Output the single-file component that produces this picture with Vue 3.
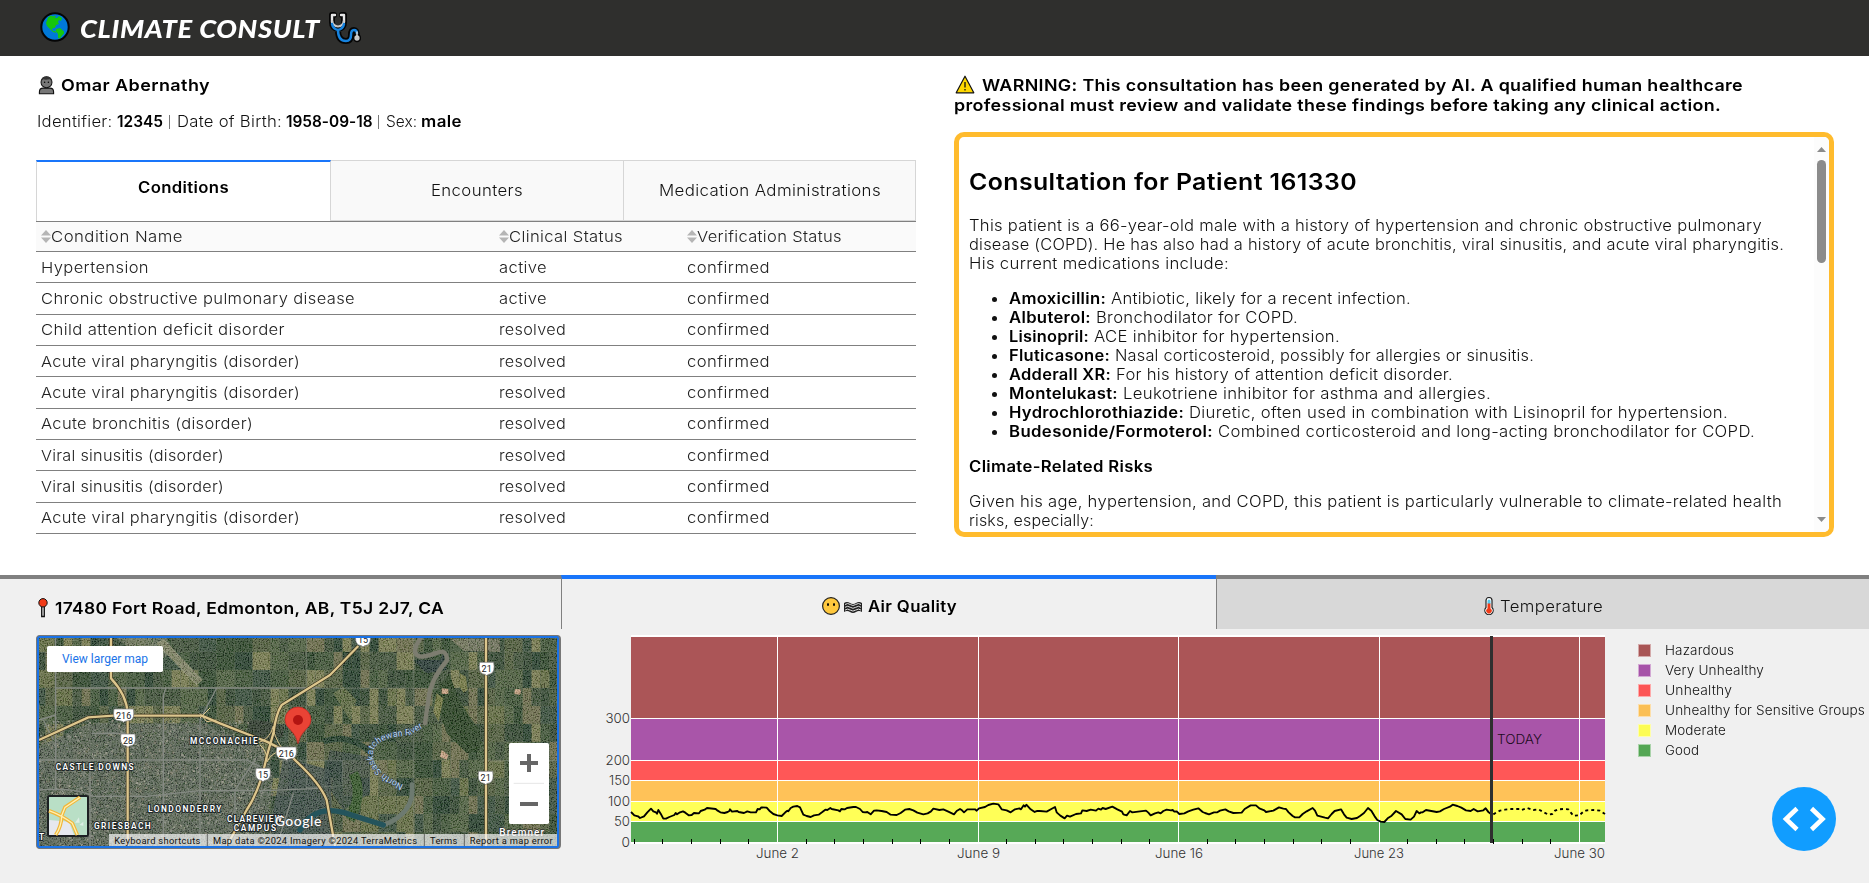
<script setup>
// v-fit sets a run of text to a given width in pixels, partly by tracking and partly by widening its letters
const vFit = {
  mounted(el, { value }) {
    el.style.display = 'inline-block'
    const n = el.textContent.trim().length
    const natural = el.offsetWidth
    if (n > 1) el.style.letterSpacing = `${(((value - natural) * 0.3) / n).toFixed(3)}px`
    const tracked = el.getBoundingClientRect().width
    el.style.transform = `scaleX(${(value / tracked).toFixed(4)})`
    el.style.width = `${tracked}px`
    el.style.marginRight = `${value - tracked + (parseFloat(getComputedStyle(el).marginRight) || 0)}px`
    el.style.display = ''
  },
}

const pharyngitis = ['Acute viral pharyngitis (disorder)', 259]
const sinusitis = ['Viral sinusitis (disorder)', 183]
const conditions = [
  ['Hypertension', 108, 'active', 48],
  ['Chronic obstructive pulmonary disease', 314, 'active', 48],
  ['Child attention deficit disorder', 244, 'resolved', 67],
  [...pharyngitis, 'resolved', 67],
  [...pharyngitis, 'resolved', 67],
  ['Acute bronchitis (disorder)', 212, 'resolved', 67],
  [...sinusitis, 'resolved', 67],
  [...sinusitis, 'resolved', 67],
  [...pharyngitis, 'resolved', 67],
]
const columns = [['Condition Name', 132], ['Clinical Status', 114], ['Verification Status', 145]]

const medications = [
  ['Amoxicillin:', 97, 'Antibiotic, likely for a recent infection.', 300],
  ['Albuterol:', 82, 'Bronchodilator for COPD.', 202],
  ['Lisinopril:', 80, 'ACE inhibitor for hypertension.', 246],
  ['Fluticasone:', 101, 'Nasal corticosteroid, possibly for allergies or sinusitis.', 419],
  ['Adderall XR:', 102, 'For his history of attention deficit disorder.', 337],
  ['Montelukast:', 109, 'Leukotriene inhibitor for asthma and allergies.', 368],
  ['Hydrochlorothiazide:', 175, 'Diuretic, often used in combination with Lisinopril for hypertension.', 539],
  ['Budesonide/Formoterol:', 204, 'Combined corticosteroid and long-acting bronchodilator for COPD.', 537],
]

const bands = [
  { y: 637, h: 82, c: '#ab5557' },
  { y: 719, h: 42, c: '#a955a9' },
  { y: 761, h: 20, c: '#ff5757' },
  { y: 781, h: 21, c: '#ffc258' },
  { y: 802, h: 20, c: '#ffff57' },
  { y: 822, h: 21, c: '#57a957' },
]
const yAxis = [[300, 718, 24.5], [200, 760, 24.5], [150, 780, 21], [100, 801, 22], [50, 821, 16], [0, 842, 8.5]]
const xAxis = [
  ['June 2', 777, 756, 43],
  ['June 9', 978, 957, 43],
  ['June 16', 1178, 1155, 48],
  ['June 23', 1379, 1354, 50],
  ['June 30', 1579, 1554, 51],
]
const ticks = Array.from({ length: 34 }, (_, i) => Math.floor(634.3 + i * 28.64))
  .filter((x) => x < 1560 && !xAxis.some((a) => Math.abs(a[1] - x) < 4))

const legend = [
  ['Hazardous', 69, '#a85555'],
  ['Very Unhealthy', 99, '#a653a8'],
  ['Unhealthy', 67, '#fc5555'],
  ['Unhealthy for Sensitive Groups', 200, '#fabf55'],
  ['Moderate', 61, '#fcfc54'],
  ['Good', 34, '#54a654'],
]

// Hourly index, in thirds of a pixel; the three series join end to end
const seriesA = '153,756 163,766 174,769 180,774 192,769 202,757 213,746 220,754 228,757 231,761 235,750 242,761 250,776 258,776 268,771 283,765 287,759 291,763 300,757 309,754 316,758 326,766 335,765 342,759 357,760 362,753 374,749 381,744 407,747 413,752 421,757 433,759 443,756 448,753 450,748 456,755 472,753 476,756 492,759 502,754 512,757 528,757 533,747 539,748 544,742 560,743 568,752 580,762 592,766 605,768 616,757 622,752 625,754 632,744 640,740 652,738 660,742 670,764 680,768 692,771 702,766 716,764 726,757 736,749 742,750 751,744 755,747 775,751 780,754 784,747 795,748 801,744 820,741 828,741 840,747 848,756 855,757 862,756 872,763 882,752 890,751 905,753 920,756 932,764 950,765 962,759 975,749 988,747 1000,751 1012,758 1030,763 1043,760 1053,754 1060,746 1078,750 1090,748 1105,755 1122,763 1130,753 1140,747 1146,751 1152,757 1162,748 1185,748 1190,752 1197,745 1215,741 1225,735 1240,731 1255,733 1265,748 1280,751 1292,757 1305,748 1318,745 1323,748 1331,736 1335,740 1339,734 1352,748 1364,756 1372,753 1380,753'
const seriesB = '0,573 20,575 34,567 45,561 50,577 61,587 74,595 81,587 90,590 108,582 123,580 127,571 140,573 152,569 168,572 175,566 183,569 188,564 197,567 217,560 232,568 246,575 250,583 260,586 270,573 277,577 300,574 318,572 325,578 332,586 345,580 355,577 362,580 370,573 380,569 393,571 398,570 403,575 410,574 418,582 433,580 445,574 460,569 475,565 488,576 495,579 507,583 522,577 532,577 540,572 556,568 566,574 580,579 605,578 614,567 632,556 648,556 658,565 673,571 678,576 700,572 717,562 730,566 738,567 746,577 758,588 765,592 778,592 788,582 800,574 818,564 825,572 832,587 855,593 864,595 875,582 884,573 903,568 912,583 920,593 935,597 951,594 960,588 972,579 984,564 994,572 1004,589 1012,600 1022,605 1033,606 1043,595 1055,587 1068,573 1085,583 1096,597 1112,599 1122,590 1130,573 1138,580 1143,577 1148,577 1158,570 1190,576 1200,574 1212,567 1230,560 1238,554 1252,558 1264,563 1278,571 1292,573 1301,567 1313,574 1330,571 1337,565 1346,577 1354,583'
const forecast = '220,763 230,757 240,752 255,749 275,747 300,747 305,750 322,744 340,750 355,748 368,755 385,764 397,762 405,752 415,748 430,747 445,748 452,757 460,767 478,766 490,755 500,751 520,750 540,752 555,762'

// Patchwork of farmland and city blocks under the map labels
let seed = 41
const rnd = () => ((seed = (seed * 16807) % 2147483647) / 2147483647)
const fieldColors = ['#2c3f2f', '#3a4a37', '#4d573b', '#1f372b', '#646a42', '#3a4e35', '#6e6a4c', '#31463a', '#29402a', '#7b7a50', '#4a5a3e']
const pick = (list) => list[Math.floor(rnd() * list.length)]
const fields = []
for (let y = 222; y < 870; y += 54) {
  for (let x = 110; x < 1680; x += 54) {
    const split = rnd() > 0.5
    fields.push({ x, y, w: split ? 27 : 54, h: 54, c: pick(fieldColors) })
    if (split) fields.push({ x: x + 27, y, w: 27, h: 54, c: pick(fieldColors) })
  }
}
const specks = Array.from({ length: 3200 }, () => ({
  x: 117 + rnd() * 700,
  y: 480 + rnd() * 380,
  s: 2 + rnd() * 5,
  c: pick(['#858681', '#6e756e', '#323d33', '#9a968c', '#4b5a47', '#3f4b42', '#766f62']),
}))
const shields = [
  ['216', 371, 467, 58], ['28', 384, 542, 42], ['216', 859, 581, 58], ['15', 789, 645, 42],
  ['15', 1089, 241, 42], ['21', 1460, 327, 42], ['21', 1457, 654, 42],
]
const places = [
  ['MCCONACHIE', 570, 552, 203], ['CASTLE DOWNS', 167, 630, 234], ['LONDONDERRY', 444, 756, 220],
  ['GRIESBACH', 282, 807, 170], ['CLAREVIEW', 681, 786, 165], ['CAMPUS', 701, 813, 127],
]
const highways = 'M117 540L265 472 340 467H605L660 490 800 545 860 575 890 605Q960 670 980 720L1005 858M333 234V355Q380 405 383 460V858M1075 258L990 345 845 435Q828 460 820 520L800 590Q780 690 740 750L680 858M1458 234V858'
</script>

<template>
  <div class="page">
    <header class="topbar">
      <svg class="globe" viewBox="0 0 30 30">
        <circle cx="15" cy="15" r="13.7" fill="#0078d7" stroke="#050505" stroke-width="2" />
        <path d="M8 5.500l3-2 2 1 2-1 1 1.500-2 1 3 0 2-2 3 2-1 3-2-1-1 2 1 2-3 1-1 3-2 0-1 1 1 2 2 0 1 2-3-1-3-3-3-3-1-3z" fill="#16c60c" />
        <path d="M16 17l4-1 4 3.500 0 2-2 2-2 3-2-.500 0-4-2.500-3z" fill="#16c60c" />
      </svg>
      <h1 v-fit="240" class="fit brand">CLIMATE CONSULT</h1>
      <svg class="steth" viewBox="0 0 32 32" fill="none" stroke-linecap="round" stroke-linejoin="round">
        <path d="M5 3H3v7q0 6 6 7 6-1 6-7V3h-2M9 18q0 11 8 11 5 0 5-6 0-5 3-5 3 0 3 7" stroke="#050505" stroke-width="6" />
        <path d="M6 3H3v7M12 3h3v7" stroke="#e6e6e6" stroke-width="2.400" />
        <path d="M3.200 9q.8 5 5.800 5.500 5-.5 5.800-5.500" stroke="#c9c9c9" stroke-width="2" />
        <path d="M3 12q1 5 6 6 5-1 6-6M9 18q0 11 8 11 5 0 5-6 0-5 3-5 3 0 3 4" stroke="#1683df" stroke-width="2.500" />
        <circle cx="28" cy="26" r="3.400" fill="#c8c8c8" stroke="#050505" stroke-width="1.500" />
        <path d="M28 20v4" stroke="#ddd" stroke-width="1.500" />
      </svg>
    </header>

    <main class="upper">
      <section class="patient">
        <div class="name">
          <svg viewBox="0 0 18 20">
            <path d="M1.500 19.300v-2q0-4 4-4h7q4 0 4 4v2z" fill="#777" stroke="#111" stroke-width="1.200" />
            <circle cx="9" cy="7" r="5.800" fill="#777" stroke="#111" stroke-width="1.100" />
            <path d="M3.500 6Q3 1 9 1t5.500 5l-2-2q-5 1-7 0z" fill="#333" />
            <circle cx="7" cy="7" r=".8" /><circle cx="11" cy="7" r=".8" />
          </svg>
          <strong v-fit="149" class="fit">Omar Abernathy</strong>
        </div>
        <div class="ids">
          <span v-fit="75.5" class="fit">Identifier:</span><b v-fit="46" class="fit">12345</b><i />
          <span v-fit="105" class="fit">Date of Birth:</span><b v-fit="86.5" class="fit">1958-09-18</b><i />
          <span v-fit="31" class="fit">Sex:</span><b v-fit="41" class="fit">male</b>
        </div>
        <nav class="tabs">
          <div class="tab active"><b v-fit="91" class="fit">Conditions</b></div>
          <div class="tab"><span v-fit="92" class="fit">Encounters</span></div>
          <div class="tab"><span v-fit="222" class="fit">Medication Administrations</span></div>
        </nav>
        <div class="table">
          <div class="row head">
            <div v-for="c in columns" :key="c[0]" class="cell">
              <svg viewBox="0 0 10 13"><path d="M0 5.500 5 0l5 5.500zM0 7.500h10L5 13z" fill="#b5b5b5" /></svg>
              <span v-fit="c[1]" class="fit">{{ c[0] }}</span>
            </div>
          </div>
          <div v-for="(r, i) in conditions" :key="i" class="row">
            <div class="cell"><span v-fit="r[1]" class="fit">{{ r[0] }}</span></div>
            <div class="cell"><span v-fit="r[3]" class="fit">{{ r[2] }}</span></div>
            <div class="cell"><span v-fit="83" class="fit">confirmed</span></div>
          </div>
        </div>
      </section>

      <section class="consult">
        <div class="warning">
          <div class="wline">
            <svg viewBox="0 0 20 19">
              <path d="M10 1.200 18.800 17.800H1.200z" fill="#ffd800" stroke="#111" stroke-width="1.200" stroke-linejoin="round" />
              <path d="M10 7v5.500M10 14v1.500" stroke="#111" stroke-width="1.300" />
            </svg>
            <b v-fit="761" class="fit">WARNING: This consultation has been generated by AI. A qualified human healthcare</b>
          </div>
          <b v-fit="767" class="fit">professional must review and validate these findings before taking any clinical action.</b>
        </div>
        <article class="report">
          <div class="body">
            <h2 v-fit="388" class="fit">Consultation for Patient 161330</h2>
            <p>
              <span v-fit="793" class="fit">This patient is a 66-year-old male with a history of hypertension and chronic obstructive pulmonary</span>
              <span v-fit="815" class="fit">disease (COPD). He has also had a history of acute bronchitis, viral sinusitis, and acute viral pharyngitis.</span>
              <span v-fit="260" class="fit">His current medications include:</span>
            </p>
            <ul>
              <li v-for="m in medications" :key="m[0]">
                <b v-fit="m[1]" class="fit">{{ m[0] }}</b><span v-fit="m[3]" class="fit">{{ m[2] }}</span>
              </li>
            </ul>
            <h3 v-fit="184" class="fit">Climate-Related Risks</h3>
            <p>
              <span v-fit="813" class="fit">Given his age, hypertension, and COPD, this patient is particularly vulnerable to climate-related health</span>
              <span v-fit="125" class="fit">risks, especially:</span>
            </p>
          </div>
          <div class="scroll">
            <svg viewBox="0 0 9 5"><path d="M0 5 4.500 0 9 5z" fill="#8b8b8b" /></svg>
            <div class="thumb" />
            <svg viewBox="0 0 9 5"><path d="M0 0 4.500 5 9 0z" fill="#8b8b8b" /></svg>
          </div>
        </article>
      </section>
    </main>

    <section class="lower">
      <div class="place">
        <div class="address">
          <svg viewBox="0 0 10 20">
            <path d="M3.700 8v10.500h2.600V8" fill="#ddd" stroke="#111" stroke-width="1.300" />
            <circle cx="5" cy="4.800" r="4.200" fill="#f03a17" stroke="#111" />
          </svg>
          <b v-fit="389" class="fit">17480 Fort Road, Edmonton, AB, T5J 2J7, CA</b>
        </div>
        <div class="mapframe">
          <svg class="map" viewBox="117 234 1554 624">
            <defs>
              <filter id="grain" x="0" y="0" width="100%" height="100%">
                <feTurbulence type="fractalNoise" baseFrequency=".25" numOctaves="3" seed="4" />
                <feColorMatrix values="1.600 0 0 0 -.55  1.600 0 0 0 -.5  1.400 0 0 0 -.5  0 0 0 0 .3" />
              </filter>
              <path id="riverlabel" d="M1211 674Q1105 628 1122 568Q1140 530 1230 526L1290 490" />
            </defs>
            <rect x="117" y="234" width="1554" height="624" fill="#3f4c39" />
            <rect v-for="(f, i) in fields" :key="'f' + i" :x="f.x" :y="f.y" :width="f.w" :height="f.h" :fill="f.c" stroke="#5b644f" stroke-width=".6" />
            <path d="M117 560L265 490H610L780 560 820 650 790 858H117z" fill="#59615a" opacity=".9" />
            <path d="M850 590l140 40 10 228H800z" fill="#38454a" opacity=".85" />
            <path d="M990 570l120 20v110l-80 50-60-90z" fill="#2c3c40" opacity=".7" />
            <rect v-for="(s, i) in specks" :key="'s' + i" :x="s.x" :y="s.y" :width="s.s" :height="s.s" :fill="s.c" />
            <path d="M350 234h150l20 40-60 40-60-40z" fill="#8b8b78" opacity=".6" />
            <path d="M492 240l115 120-18 14L470 250z" fill="#85846a" stroke="#a8a48a" stroke-width="2" />
            <path d="M750 480q60 0 100 20v30l-70 20-40-40z" fill="#252f28" />
            <path d="M1240 300l80 0 10-20 10 50-60 10z" fill="#1f3034" />
            <path d="M1350 340q20 90 90 170l0 60-40 10-60-60-40-120z" fill="#22391f" />
            <path d="M1350 236h150v40l-110-4z" fill="#8e8572" opacity=".7" />
            <path d="M1380 340l18 10 5 40-12 8-14-20zM1310 400l20 15-14 70-16-30z" fill="#9b9450" opacity=".7" />
            <path d="M1325 385l20 2v15h-20zM1545 388h18l-2 16-18-2zM1325 570l20 15-5 15-20-10z" fill="#dba98d" />
            <path d="M1000 400l30-20 40 40-20 60z" fill="#7f8150" opacity=".6" />
            <path d="M970 545q80-30 150 40" fill="none" stroke="#183327" stroke-width="18" />
            <path d="M1060 640q30 60-10 140" fill="none" stroke="#2c4f24" stroke-width="30" />
            <rect x="117" y="234" width="1554" height="624" filter="url(#grain)" />

            <g fill="none" stroke="#858a83" stroke-width="4">
              <path d="M165 384H960M167 234V690M117 690Q220 680 280 709H440L600 692H790L960 685M117 600H740l40 20M497 384L490 410V858M650 384L600 480V858M275 520h110v-2M270 600v258M880 700l-50 158M705 858V690l60-90" />
              <path d="M117 480l50-15M130 480l30 60" />
            </g>
            <path d="M920 234v455M840 602h188v75l-110 6M1458 602h213M960 385h360M1240 234v600" fill="none" stroke="#8b9289" stroke-width="2" opacity=".7" />
            <g fill="none" stroke-linecap="round">
              <path d="M1262 234Q1230 280 1260 290C1310 290 1335 250 1342 300Q1290 360 1285 420L1275 490" stroke="#7d7d70" stroke-width="13" />
              <path d="M1236 674Q1245 760 1150 795" stroke="#6d7a70" stroke-width="14" />
              <path d="M900 810Q940 735 1030 757L1150 795" stroke="#24545c" stroke-width="16" />
            </g>
            <g fill="none" stroke-linejoin="round">
              <path :d="highways" stroke="#3c3420" stroke-width="11" />
              <path :d="highways" stroke="#dcc68d" stroke-width="7" />
              <path d="M775 548q35-10 45-50 0 30 25 65M780 555q20 15 22 50 10-25 40-32M600 460l20 25 30-5M600 474l30-30" stroke="#dcc68d" stroke-width="3" />
            </g>

            <g v-for="(s, i) in shields" :key="'h' + i">
              <path :d="`M${s[1] - s[3] / 2} ${s[2] - 20}h${s[3]}q5 28-8 34-${s[3] / 2 - 8} 2-${s[3] / 2 - 8} 7 0-5-${s[3] / 2 - 8}-7-13-6-8-34z`" fill="#fff" stroke="#777" stroke-width="2" />
              <text :x="s[1]" :y="s[2] + 9" class="num">{{ s[0] }}</text>
            </g>
            <text v-for="p in places" :key="p[0]" :x="p[1]" :y="p[2]" :textLength="p[3]" class="town">{{ p[0] }}</text>
            <text x="1498" y="827" textLength="134" class="bremner">Bremner</text>
            <text class="rivername"><textPath href="#riverlabel" textLength="318">North Saskatchewan River</textPath></text>
            <text x="117" y="840" class="town">T</text>

            <path d="M894 551Q890 528 870 508Q855 495 855 480a39 39 0 0 1 78 0Q933 495 918 508Q898 528 894 551z" fill="#ea4335" stroke="#c5221f" stroke-width="2" />
            <circle cx="894" cy="480" r="15" fill="#b31412" />

            <rect x="141" y="258" width="348" height="78" rx="5" fill="#fff" />
            <text x="186" y="309" textLength="258" class="larger">View larger map</text>

            <rect x="144" y="708" width="120" height="120" rx="4" fill="#b9dfc6" stroke="#1d2023" stroke-width="6" />
            <path d="M147 780l60 5 15 40h-75z" fill="#e6e8ef" />
            <g fill="none">
              <path d="M147 752q40 15 70 38l15 35M240 712l-45 30-10 25q0 30-18 58" stroke="#f1b638" stroke-width="11" />
              <path d="M147 752q40 15 70 38l15 35M240 712l-45 30-10 25q0 30-18 58" stroke="#fff0b0" stroke-width="4" />
            </g>
            <path d="M225 788l12-16 2 16zM238 795l12-10v12z" fill="#dceee4" />

            <rect x="1527" y="549" width="120" height="243" rx="5" fill="#fff" />
            <path d="M1541 670h91" stroke="#e6e6e6" stroke-width="3" />
            <path d="M1560 609h54M1587 582v54M1560 732h54" stroke="#666" stroke-width="12" />
            <text x="824" y="797" textLength="140" class="google">Google</text>
            <rect x="327" y="822" width="1344" height="36" fill="#f5f5f5" opacity=".7" />
            <path d="M622 822v36M1273 822v36M1393 822v36" stroke="#333" stroke-width="2" />
            <g class="credit">
              <text x="343" y="851" textLength="258">Keyboard shortcuts</text>
              <text x="639" y="851" textLength="612">Map data ©2024 Imagery ©2024 TerraMetrics</text>
              <text x="1290" y="851" textLength="82">Terms</text>
              <text x="1409" y="851" textLength="249">Report a map error</text>
            </g>
          </svg>
        </div>
      </div>

      <div class="air">
        <nav class="ctabs">
          <div class="ctab on">
            <svg class="face" viewBox="0 0 18 18">
              <circle cx="9" cy="9" r="8.400" fill="#ffc83d" stroke="#222" stroke-width="1.200" />
              <ellipse cx="6" cy="7.500" rx="1" ry="1.500" /><ellipse cx="12" cy="7.500" rx="1" ry="1.500" />
            </svg>
            <svg class="fog" viewBox="0 0 18 12" fill="none">
              <path d="M0 2q3-2 6 0t6 0 6 0V11q-3-2-6 0t-6 0-6 0z" fill="#222" />
              <path d="M1 3.500q2.700-2 5.300 0t5.400 0 5.300 0M1 6.300q2.700-2 5.300 0t5.400 0 5.300 0M1 9.100q2.700-2 5.300 0t5.400 0 5.300 0" stroke="#ddd" stroke-width="1" />
            </svg>
            <b v-fit="89" class="fit">Air Quality</b>
          </div>
          <div class="ctab off">
            <svg class="thermo" viewBox="0 0 10 18">
              <path d="M2 3.500a3 3 0 0 1 6 0v7a4.200 4.200 0 1 1-6 0z" fill="#fff" stroke="#222" stroke-width="1.200" />
              <path d="M3.500 4a1.500 1.500 0 0 1 3 0v3h-3z" fill="#50c8f0" />
              <path d="M3.500 6.500h3v5a2.700 2.700 0 1 1-3 0z" fill="#f03a17" />
            </svg>
            <span v-fit="103" class="fit">Temperature</span>
          </div>
        </nav>
        <div class="chartrow">
          <svg class="chart" viewBox="600 630 1010 240">
            <rect x="631" y="635" width="974" height="209" fill="#fff" />
            <g shape-rendering="crispEdges">
              <rect v-for="b in bands" :key="b.y" x="631" :y="b.y" width="974" :height="b.h - 1" :fill="b.c" />
              <rect v-for="a in xAxis" :key="a[0]" :x="a[1]" y="637" width="1" height="206" fill="#fff" />
              <rect v-for="t in ticks" :key="t" :x="t" y="839" width="1" height="5" />
            </g>
            <text v-for="a in yAxis" :key="a[0]" :x="630 - a[2]" :y="a[1] + 5" :textLength="a[2]" lengthAdjust="spacingAndGlyphs">{{ a[0] }}</text>
            <text v-for="a in xAxis" :key="a[0]" :x="a[2]" y="858" :textLength="a[3]" lengthAdjust="spacingAndGlyphs">{{ a[0] }}</text>
            <g fill="none" stroke="#000" stroke-width="5.600" stroke-linejoin="round">
              <polyline :points="seriesA" transform="translate(580 560) scale(.33333)" />
              <polyline :points="seriesB" transform="translate(1040 620) scale(.33333)" />
              <polyline :points="forecast" transform="translate(1420 560) scale(.33333)" stroke-dasharray="9 9" />
            </g>
            <rect x="1490" y="636" width="3" height="207" fill="#2f2f2f" />
            <text x="1497" y="744" textLength="45" lengthAdjust="spacingAndGlyphs" class="today">TODAY</text>
          </svg>
          <ul class="legend">
            <li v-for="l in legend" :key="l[0]">
              <svg viewBox="0 0 13 13"><rect width="13" height="13" :fill="l[2]" stroke="#fff" stroke-opacity=".5" stroke-width="2" /></svg>
              <span v-fit="l[1]" class="fit">{{ l[0] }}</span>
            </li>
          </ul>
        </div>
      </div>
      <div class="devtools">
        <svg viewBox="0 0 64 64" fill="none" stroke="#fff" stroke-width="4.600">
          <path d="M25 21.500 14 32l11 10.500M39.500 21.500 50.500 32l-11 10.500" />
        </svg>
      </div>
    </section>
  </div>
</template>

<style>
html, body { margin: 0; overflow: hidden; background: #fff; }
</style>

<style scoped>
.page { width: 1869px; height: 883px; font: 300 15.3px/19px Inter, "Open Sans", sans-serif; color: #111; overflow: hidden; }
svg { display: block; flex: none; }
.fit { display: inline-block; white-space: nowrap; transform-origin: 0 50%; }
b, strong, h2, h3 { font-weight: 600; color: #000; margin: 0; }

.topbar { height: 56px; box-sizing: border-box; background: #2f2f2d; display: flex; align-items: flex-start; padding: 12px 0 0 40px; }
.globe { width: 30px; height: 30px; }
.brand { margin: 0 9px 0 10px; font: italic 900 25px/32px Lato, sans-serif; color: #fff; }
.steth { width: 32px; height: 32px; }

.upper { height: 519px; box-sizing: border-box; padding: 0 35px 0 36px; display: grid; grid-template-columns: 880px 880px; gap: 38px; }
.name { display: flex; align-items: center; height: 20px; margin-top: 19px; padding-left: 2px; font-size: 16.500px; }
.name svg { width: 17px; height: 20px; margin-right: 6px; }
.ids { display: flex; height: 19px; margin: 17px 0 0 1px; }
.ids b { margin-left: 4px; }
.ids i { width: 1px; height: 14px; margin: 3px 7px 0 6px; background: #777; }
.tabs { display: grid; grid-template-columns: 295px 293px 292px; height: 61px; margin-top: 29px; }
.tab { box-sizing: border-box; border: 1px solid #d6d6d6; border-left-width: 0; background: #f9f9f9; text-align: center; padding-top: 20px; }
.tab.active { background: #fff; border-top: 2px solid #1975fa; border-left-width: 1px; border-bottom: 0; padding-top: 16px; }
.table { font-size: 15px; color: #222; border-top: 1px solid #808080; }
.row { display: grid; grid-template-columns: 458px 188px 1fr; height: 31.330px; box-sizing: border-box; border-bottom: 1px solid #808080; align-items: center; padding-left: 5px; }
.row.head { height: 30px; background: #fafafa; }
.cell { display: flex; align-items: center; }
.cell svg { width: 10px; height: 13px; }

.warning { height: 76px; box-sizing: border-box; padding-top: 19px; font-size: 16.500px; line-height: 20px; }
.wline { display: flex; height: 20px; }
.wline svg { width: 20px; height: 19px; margin: 0 7px 0 1px; }
.warning b { display: block; }
.report { height: 405px; box-sizing: border-box; border: 5px solid #ffbb2d; border-radius: 10px; display: flex; justify-content: space-between; overflow: hidden; }
.body { padding-left: 10px; }
.body h2 { font-size: 23px; line-height: 30px; margin-top: 30px; display: block; }
.body p { margin: 19px 0 0; }
.body p .fit { display: block; }
.body ul { margin: 16px 0; padding-left: 40px; }
.body li { height: 19px; }
.body li::marker { font-size: 16px; }
.body li b { margin-right: 5px; }
.body h3 { font-size: 15.300px; display: block; }
.body h3 + p { margin-top: 16px; }
.scroll { width: 15px; box-sizing: border-box; background: #fcfcfc; display: flex; flex-direction: column; align-items: center; padding: 10px 0; }
.scroll svg { width: 9px; height: 5px; }
.thumb { width: 9px; height: 103px; border-radius: 5px; background: #8b8b8b; margin: 8px 0 auto; }

.lower { height: 308px; background: #f0f0f0; display: grid; grid-template-columns: 561px 1fr; position: relative; }
.place { border-top: 4px solid #808080; }
.address { display: flex; align-items: center; height: 20px; margin: 19px 0 17px 38px; font-size: 16.300px; }
.address svg { width: 10px; height: 20px; margin-right: 7px; }
.mapframe { width: 525px; height: 214px; margin-left: 36px; box-sizing: border-box; background: #1a73e8; border: 1px solid #777; border-right-width: 2px; border-radius: 4px; padding: 2px; }
.map { width: 518px; height: 208px; font-family: Roboto, sans-serif; }
.num { font-size: 27px; font-weight: 400; text-anchor: middle; fill: #222; }
.town { font-size: 25px; font-weight: 600; fill: #fff; stroke: #20282a; stroke-width: 6px; paint-order: stroke; }
.bremner { font-size: 30px; fill: #fff; font-weight: 500; stroke: #333; stroke-width: 4px; paint-order: stroke; }
.rivername { font-size: 27px; font-weight: 400; fill: #b7d5f1; stroke: #33434d; stroke-width: 3px; paint-order: stroke; }
.larger { font-size: 36px; font-weight: 400; fill: #1a73e8; }
.google { font: 500 42px Lato, sans-serif; fill: #fff; stroke: #444; stroke-width: 2px; paint-order: stroke; }
.credit { font-size: 28px; font-weight: 400; fill: #111; }

.ctabs { display: grid; grid-template-columns: 655px 653px; height: 54px; }
.ctab { box-sizing: border-box; border-top: 4px solid #808080; border-left: 1px solid #808080; display: flex; align-items: flex-start; padding-top: 18px; }
.ctab.on { border-top-color: #1975fa; padding-left: 260px; }
.ctab.off { background: #d8d8d8; padding-left: 267px; }
.face { width: 18px; height: 18px; }
.fog { width: 18px; height: 12px; margin: 4px 6px 0 4px; }
.thermo { width: 10px; height: 18px; margin-right: 6px; }
.chartrow { display: flex; font-size: 13px; }
.chart { width: 1010px; height: 240px; margin: 1px 0 0 39px; font-size: 13px; color: #333; }
.chart text { fill: #333; font-weight: 300; }
.chart .today { fill: #1c0b1c; font-size: 12.800px; }
.legend { list-style: none; margin: 11px 0 0 28px; padding: 0; }
.legend li { display: flex; align-items: center; height: 20px; }
.legend svg { width: 13px; height: 13px; margin-right: 14px; }
.devtools { position: absolute; left: 1772px; top: 212px; width: 64px; height: 64px; border-radius: 50%; background: #119dff; }
</style>
